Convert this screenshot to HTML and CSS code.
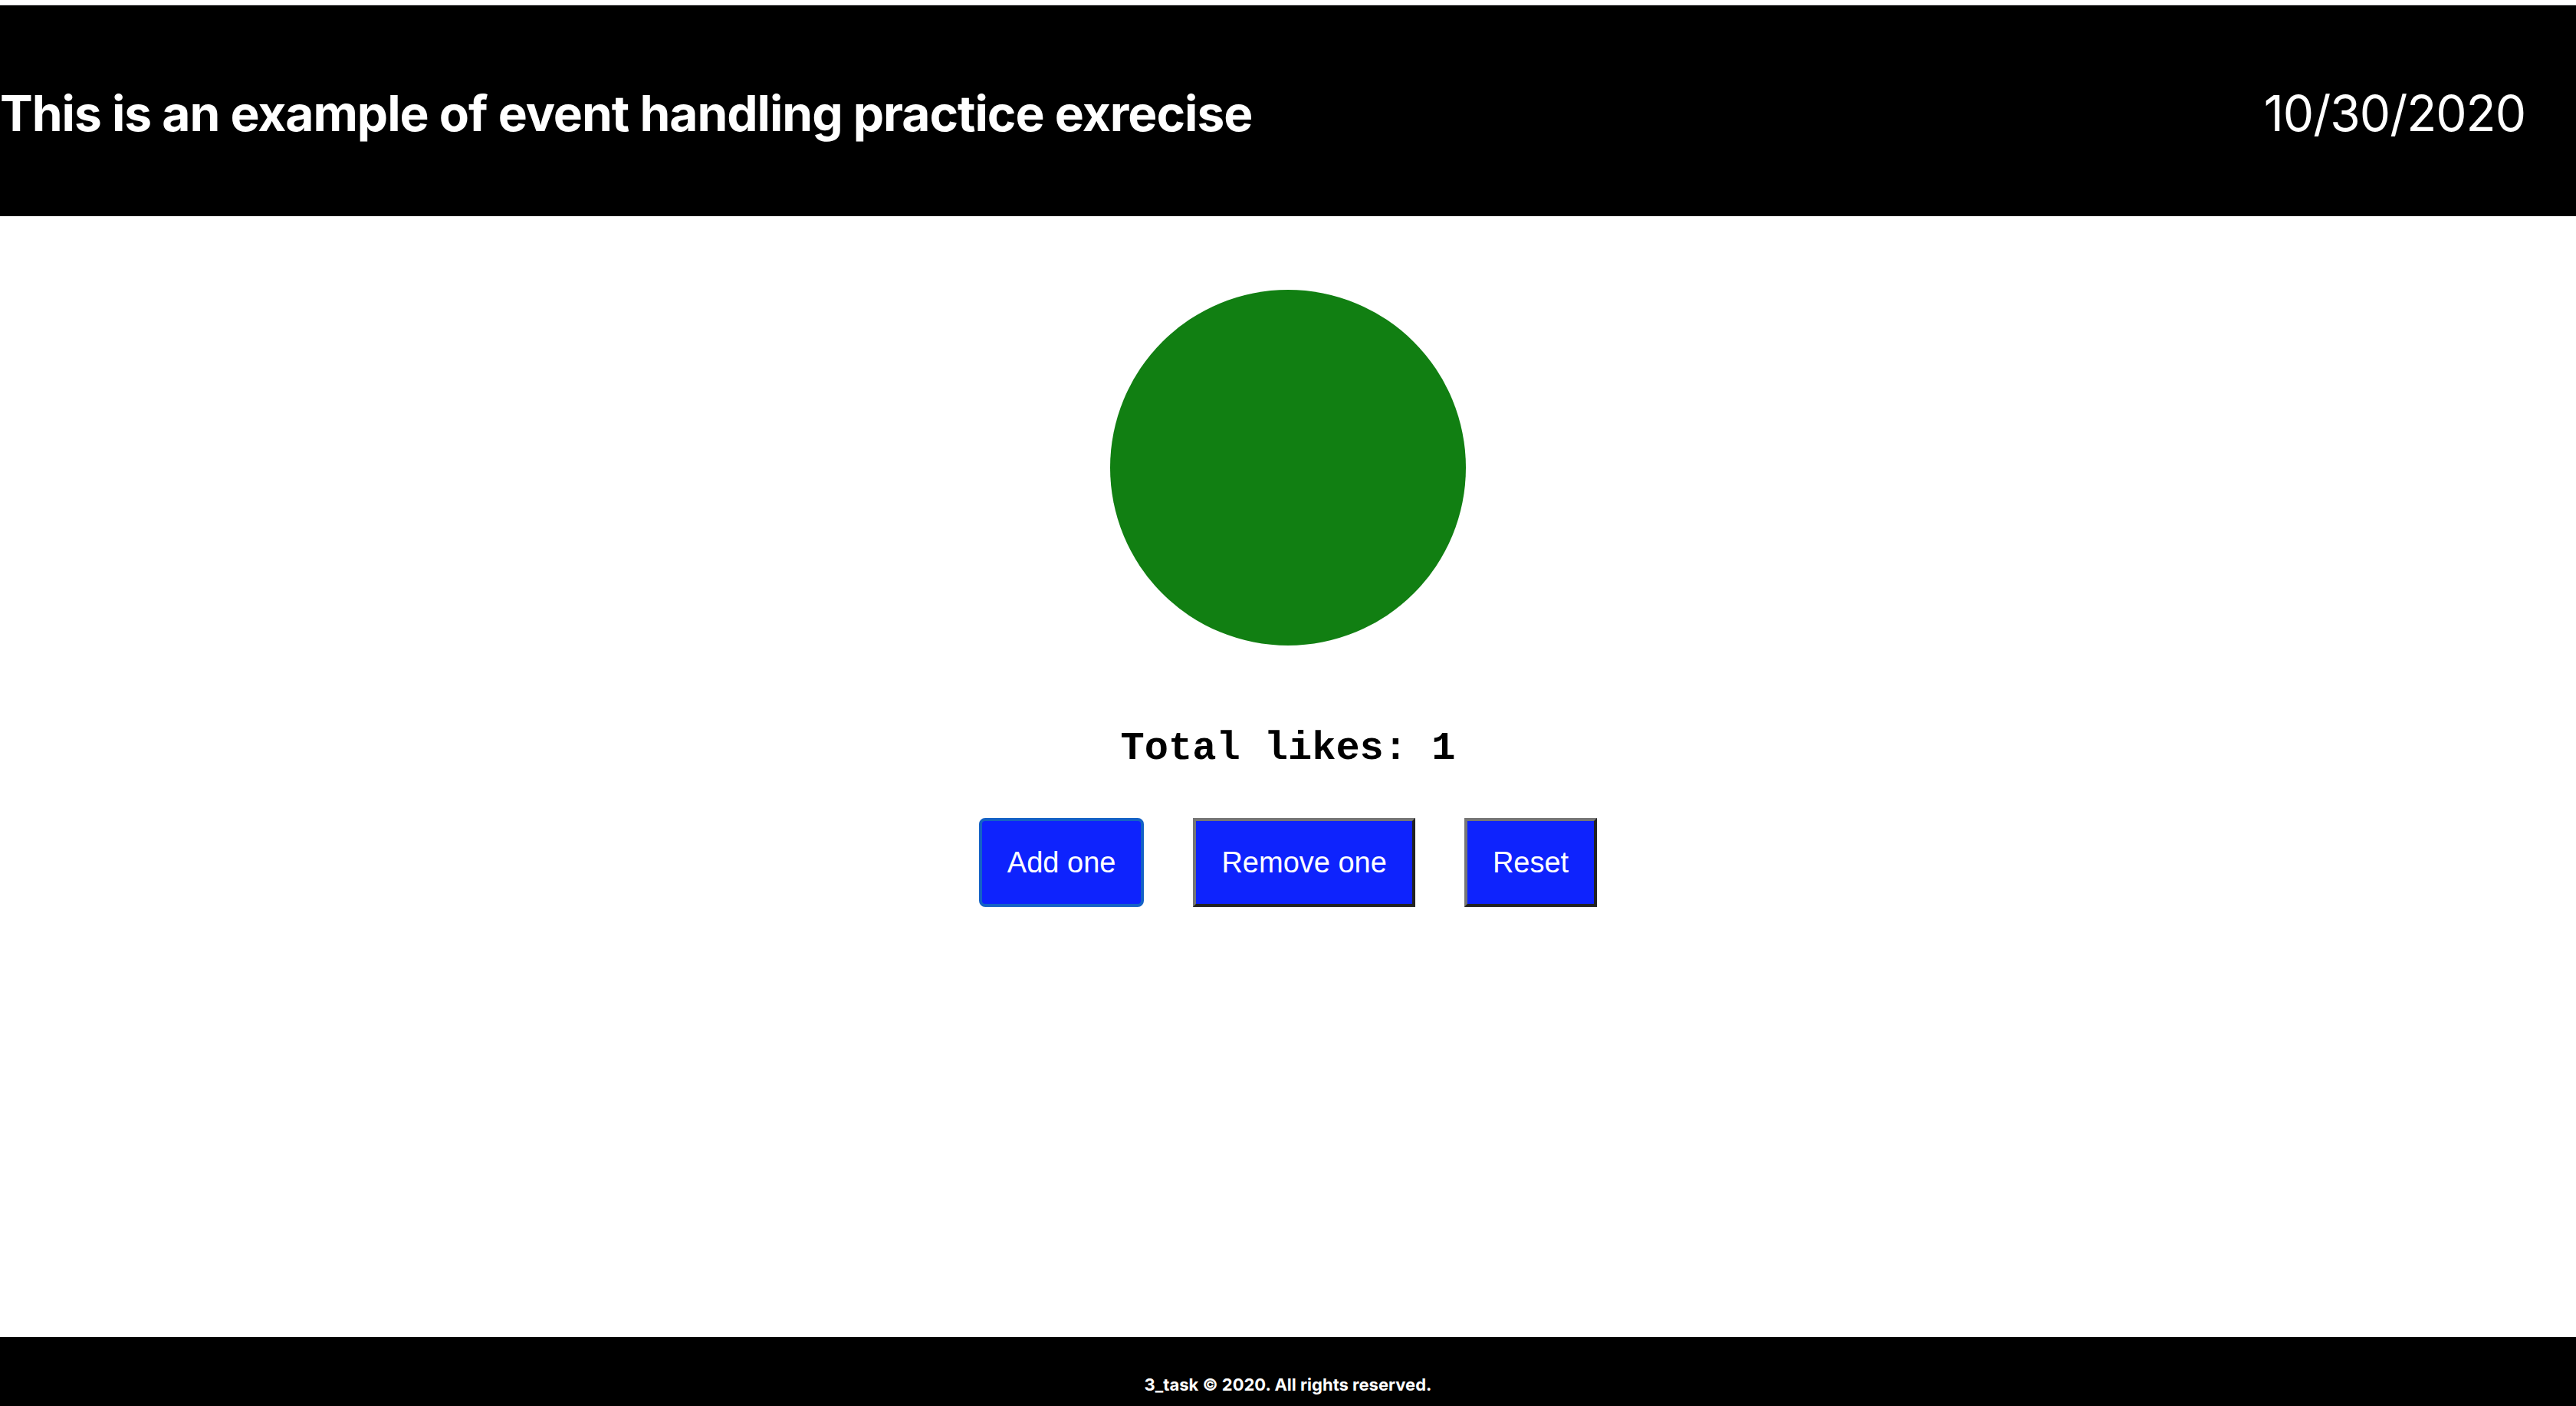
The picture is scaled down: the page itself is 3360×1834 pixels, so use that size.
FILE: index.html
```html
<!DOCTYPE html>
<html lang="en">
<head>
<meta charset="utf-8">
<title>Event handling practice</title>
<link rel="stylesheet" href="styles.css">
</head>
<body>
<header class="site-header">
  <h1 class="title">This is an example of event handling practice exrecise</h1>
  <div class="date">10/30/2020</div>
</header>
<main class="main">
  <div class="circle"></div>
  <h2 class="likes">Total likes: 1</h2>
  <div class="buttons">
    <button class="btn btn-focus">Add one</button>
    <button class="btn">Remove one</button>
    <button class="btn">Reset</button>
  </div>
</main>
<footer class="site-footer">
  <p class="copy">3_task © 2020. All rights reserved.</p>
</footer>
</body>
</html>
```
FILE: styles.css
```css
html, body {
  margin: 0;
  padding: 0;
}
body {
  background: #ffffff;
  padding-top: 6px;
  min-height: 1834px;
  box-sizing: border-box;
  display: flex;
  flex-direction: column;
  font-family: Inter, "Noto Sans", sans-serif;
}
.site-header {
  box-sizing: border-box;
  height: 276px;
  border-top: 1px solid #d9d9db;
  background: #000;
  color: #fff;
  display: flex;
  align-items: center;
  justify-content: space-between;
  padding: 8px 66px 0 0;
}
.title {
  margin: 0;
  font-size: 64px;
  font-weight: 700;
  letter-spacing: -1px;
  line-height: 1.2;
}
.date {
  font-size: 64px;
  font-weight: 400;
  letter-spacing: -1px;
  line-height: 1.2;
}
.main {
  flex: 1;
  display: flex;
  flex-direction: column;
  align-items: center;
}
.circle {
  width: 464px;
  height: 464px;
  border-radius: 50%;
  background: #117f12;
  margin-top: 96px;
}
.likes {
  margin: 105px 0 0;
  font-family: "Liberation Mono", "Courier New", monospace;
  font-weight: 700;
  font-size: 52px;
  line-height: normal;
  color: #000;
}
.buttons {
  margin-top: 61px;
  display: flex;
  gap: 64px;
}
.btn {
  box-sizing: border-box;
  height: 116px;
  padding: 0 33px;
  font-family: "Liberation Sans", Arial, sans-serif;
  font-size: 38px;
  color: #fff;
  background: #0e23fd;
  border: 4px solid;
  border-color: #767676 #222 #222 #767676;
  border-radius: 0;
}
.btn-focus {
  border-color: #1462c6;
  border-radius: 8px;
}
.site-footer {
  box-sizing: border-box;
  height: 90px;
  background: #000;
  color: #fff;
  padding-top: 51px;
}
.copy {
  margin: 0;
  text-align: center;
  font-size: 22px;
  font-weight: 700;
  line-height: 22px;
}
```
